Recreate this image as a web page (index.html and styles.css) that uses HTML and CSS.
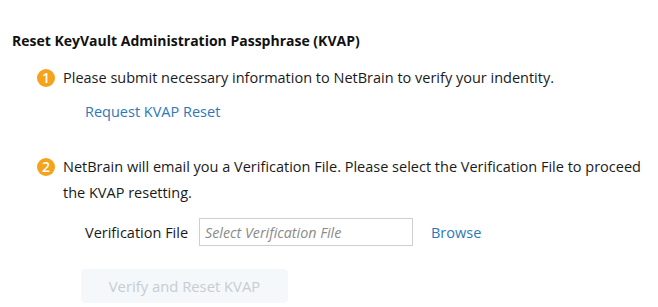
FILE: index.html
```html
<!DOCTYPE html>
<html lang="en">
<head>
  <meta charset="UTF-8" />
  <title>Reset KVAP</title>
  <link rel="stylesheet" href="styles.css">
</head>
<body>
  <div class="panel">
    <div class="title">Reset KeyVault Administration Passphrase (KVAP)</div>

    <div class="step">
      <span class="badge">1</span>
      <div class="step-text">Please submit necessary information to NetBrain to verify your indentity.</div>
    </div>
    <div class="step-body">
      <a class="link" href="#">Request KVAP Reset</a>
    </div>

    <div class="step step-two">
      <span class="badge">2</span>
      <div class="step-text">NetBrain will email you a Verification File. Please select the Verification File to proceed the KVAP resetting.</div>
    </div>
    <div class="step-body">
      <div class="file-row">
        <label class="file-label">Verification File</label>
        <input class="file-input" type="text" placeholder="Select Verification File">
        <a class="link" href="#">Browse</a>
      </div>
      <button class="verify" disabled>Verify and Reset KVAP</button>
    </div>
  </div>
</body>
</html>
```

FILE: styles.css
```css
html, body {
  margin: 0;
  padding: 0;
  background: #fff;
}

body {
  font-family: "Open Sans", "Noto Sans", sans-serif;
  color: #1a1a1a;
  font-size: 14.5px;
}

.panel {
  padding: 30px 12px 0 12px;
}

.title {
  font-weight: 700;
  font-size: 14px;
  line-height: 22px;
  color: #111;
}

.step {
  display: flex;
  align-items: flex-start;
  margin-top: 13px;
  padding-left: 25px;
}

.step-two {
  margin-top: 31px;
}

.badge {
  flex: none;
  width: 18px;
  height: 18px;
  border-radius: 50%;
  background: #f5a31d;
  color: #fff;
  font-size: 14px;
  font-weight: 600;
  line-height: 18px;
  text-align: center;
  margin-top: 4px;
  margin-right: 8px;
}

.step-text {
  line-height: 26px;
  max-width: 600px;
}

.step-body {
  padding-left: 73px;
}

.link {
  color: #2e78b7;
  text-decoration: none;
  display: inline-block;
  margin-top: 10px;
  line-height: 22px;
}

.file-row {
  display: flex;
  align-items: center;
  margin-top: 12px;
}

.file-row .link {
  margin-top: 2px;
  margin-left: 18px;
}

.file-label {
  width: 114px;
}

.file-input {
  width: 214px;
  height: 28px;
  box-sizing: border-box;
  border: 1px solid #cfcfcf;
  padding: 0 5px;
  font-family: "Open Sans", sans-serif;
  font-size: 14.3px;
  font-style: italic;
  color: #333;
  outline: none;
}

.file-input::placeholder {
  color: #8a8a8a;
}

.verify {
  display: block;
  margin: 23px 0 0 -4px;
  width: 207px;
  height: 34px;
  border: none;
  border-radius: 4px;
  background: #f4f8fb;
  color: #c8ccd0;
  font-family: "Open Sans", sans-serif;
  font-size: 14.8px;
}
```
